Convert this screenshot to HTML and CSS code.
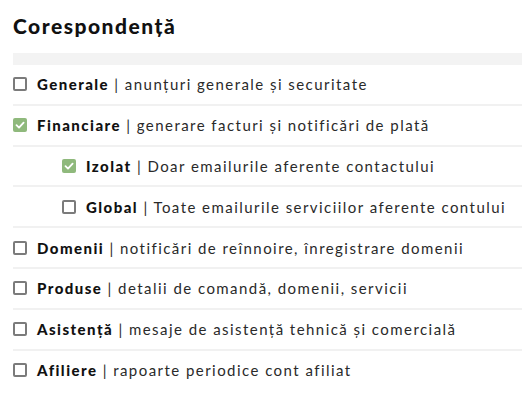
FILE: index.html
```html
<!DOCTYPE html>
<html lang="ro">
<head>
<meta charset="utf-8">
<title>Corespondență</title>
<link rel="stylesheet" href="styles.css">
</head>
<body>
<div class="page">
  <h1 class="title">Corespondență</h1>
  <div class="bar"></div>
  <ul class="list">
    <li class="row"><span class="box"></span><span class="text"><b>Generale</b> | anunțuri generale și securitate</span></li>
    <li class="row"><span class="box checked"><svg viewBox="0 0 14 14" width="14" height="14"><path d="M3.5 7.2 L6 9.6 L10.6 4.6" fill="none" stroke="#fff" stroke-width="1.8" stroke-linecap="round" stroke-linejoin="round"/></svg></span><span class="text"><b>Financiare</b> | generare facturi și notificări de plată</span></li>
    <li class="row sub"><span class="box checked"><svg viewBox="0 0 14 14" width="14" height="14"><path d="M3.5 7.2 L6 9.6 L10.6 4.6" fill="none" stroke="#fff" stroke-width="1.8" stroke-linecap="round" stroke-linejoin="round"/></svg></span><span class="text"><b>Izolat</b> | Doar emailurile aferente contactului</span></li>
    <li class="row sub"><span class="box"></span><span class="text"><b>Global</b> | Toate emailurile serviciilor aferente contului</span></li>
    <li class="row"><span class="box"></span><span class="text"><b>Domenii</b> | notificări de reînnoire, înregistrare domenii</span></li>
    <li class="row"><span class="box"></span><span class="text"><b>Produse</b> | detalii de comandă, domenii, servicii</span></li>
    <li class="row"><span class="box"></span><span class="text"><b>Asistență</b> | mesaje de asistență tehnică și comercială</span></li>
    <li class="row last"><span class="box"></span><span class="text"><b>Afiliere</b> | rapoarte periodice cont afiliat</span></li>
  </ul>
</div>
</body>
</html>
```

FILE: styles.css
```css
html, body {
  margin: 0;
  padding: 0;
  background: #fff;
}
body {
  font-family: "Lato", "Open Sans", sans-serif;
  color: #1e1e1e;
}
.page {
  padding-left: 13px;
}
.title {
  margin: 0;
  padding-top: 13px;
  font-size: 21px;
  line-height: 26px;
  font-weight: 900;
  letter-spacing: 1.5px;
  color: #111;
}
.bar {
  margin-top: 14px;
  height: 12px;
  background: #f3f3f3;
}
.list {
  list-style: none;
  margin: 0;
  padding: 0;
}
.row {
  display: flex;
  align-items: center;
  height: 38.8px;
  border-bottom: 2px solid #f1f1f1;
  font-size: 15px;
  letter-spacing: 1.45px;
  color: #2a2a2a;
}
.row.last {
  border-bottom: none;
}
.row.sub {
  padding-left: 49px;
}
.row b {
  font-weight: 900;
  color: #111;
}
.box {
  flex: none;
  box-sizing: border-box;
  width: 14px;
  height: 14px;
  border: 2px solid #7b7b7b;
  border-radius: 2px;
  margin-right: 10px;
  display: flex;
  align-items: center;
  justify-content: center;
}
.box.checked {
  border: none;
  background: #8fb97c;
}
.box svg {
  display: block;
}
```
